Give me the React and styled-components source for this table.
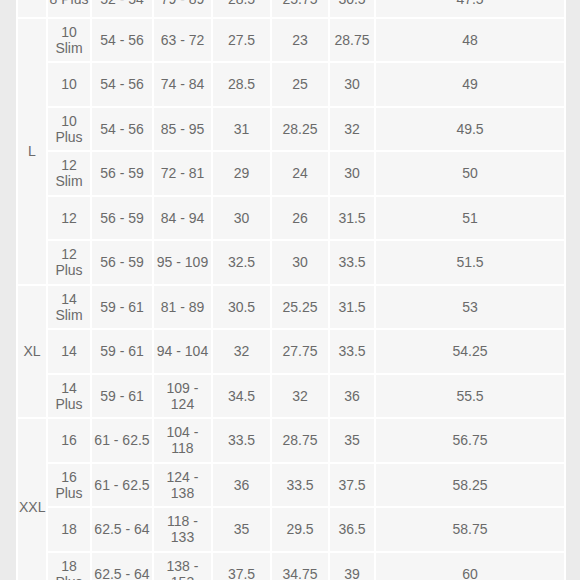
import React from 'react'
import styled, { createGlobalStyle } from 'styled-components'

const GlobalStyle = createGlobalStyle`
  html, body {
    margin: 0;
    padding: 0;
    background: #ebebeb;
  }
`

const Page = styled.div`
  width: 580px;
  height: 580px;
  overflow: hidden;
  padding-left: 16px;
  box-sizing: border-box;
`

const Table = styled.table`
  width: 550px;
  margin-top: -28px;
  background: #ffffff;
  border-collapse: separate;
  border-spacing: 2px;
  table-layout: fixed;
  font-family: 'Liberation Sans', Arial, sans-serif;
  font-size: 14px;
  line-height: 16px;
  color: #6a6a6a;
`

const Col = styled.col`
  width: ${p => p.w}px;
`

const Row = styled.tr`
  height: 42.5px;
`

const Cell = styled.td`
  box-sizing: border-box;
  background: #f6f6f6;
  text-align: center;
  vertical-align: middle;
  padding: ${p => (p.$lead ? '8px 1px 0' : '0 1px')};
`

const widths = [28, 42, 60, 57, 57, 56, 44, 188]

const groups = [
  {
    name: 'M',
    rows: [['8 Plus', '52 - 54', '79 - 89', '28.5', '25.75', '30.5', '47.5']],
    hidden: true
  },
  {
    name: 'L',
    rows: [
      ['10 Slim', '54 - 56', '63 - 72', '27.5', '23', '28.75', '48'],
      ['10', '54 - 56', '74 - 84', '28.5', '25', '30', '49'],
      ['10 Plus', '54 - 56', '85 - 95', '31', '28.25', '32', '49.5'],
      ['12 Slim', '56 - 59', '72 - 81', '29', '24', '30', '50'],
      ['12', '56 - 59', '84 - 94', '30', '26', '31.5', '51'],
      ['12 Plus', '56 - 59', '95 - 109', '32.5', '30', '33.5', '51.5']
    ]
  },
  {
    name: 'XL',
    rows: [
      ['14 Slim', '59 - 61', '81 - 89', '30.5', '25.25', '31.5', '53'],
      ['14', '59 - 61', '94 - 104', '32', '27.75', '33.5', '54.25'],
      ['14 Plus', '59 - 61', '109 - 124', '34.5', '32', '36', '55.5']
    ]
  },
  {
    name: 'XXL',
    rows: [
      ['16', '61 - 62.5', '104 - 118', '33.5', '28.75', '35', '56.75'],
      ['16 Plus', '61 - 62.5', '124 - 138', '36', '33.5', '37.5', '58.25'],
      ['18', '62.5 - 64', '118 - 133', '35', '29.5', '36.5', '58.75'],
      ['18 Plus', '62.5 - 64', '138 - 153', '37.5', '34.75', '39', '60']
    ]
  }
]

export default function App() {
  return (
    <Page>
      <GlobalStyle />
      <Table>
        <colgroup>
          {widths.map((w, i) => (
            <Col key={i} w={w} />
          ))}
        </colgroup>
        <tbody>
          {groups.map(group =>
            group.rows.map((row, i) => (
              <Row key={group.name + i}>
                {i === 0 && (
                  <Cell rowSpan={group.rows.length}>
                    {group.hidden ? '' : group.name}
                  </Cell>
                )}
                {row.map((value, j) => (
                  <Cell key={j} $lead={group.hidden}>
                    {value}
                  </Cell>
                ))}
              </Row>
            ))
          )}
        </tbody>
      </Table>
    </Page>
  )
}
